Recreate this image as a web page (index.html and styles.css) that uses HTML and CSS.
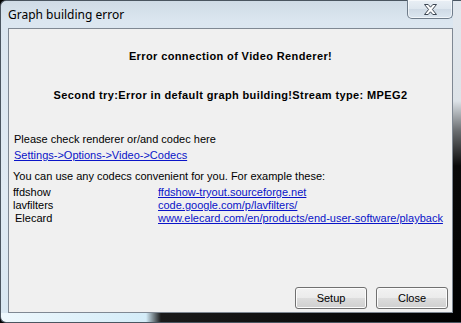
FILE: index.html
```html
<!DOCTYPE html>
<html lang="en">
<head>
    <meta charset="UTF-8">
    <title>Graph building error</title>
    <link rel="stylesheet" href="styles.css">
</head>
<body>

    <div class="window">
        <div class="titlebar">
            <span class="title">Graph building error</span>
            <button class="close-btn" aria-label="Close">
                <svg width="15" height="11" viewBox="0 0 15 11">
                    <path d="M1.5 0.5 H5.2 L7.5 3.2 L9.8 0.5 H13.5 L9.4 5.5 L13.5 10.5 H9.8 L7.5 7.8 L5.2 10.5 H1.5 L5.6 5.5 Z"
                          fill="#ffffff" stroke="#3c4652" stroke-width="1" stroke-linejoin="round"/>
                </svg>
            </button>
        </div>

        <div class="client">
            <p class="headline">Error connection of Video Renderer!</p>
            <p class="headline second">Second try:Error in default graph building!Stream type: MPEG2</p>

            <p class="note">Please check renderer or/and codec here</p>
            <a class="link settings" href="#">Settings-&gt;Options-&gt;Video-&gt;Codecs</a>

            <p class="note codecs-intro">You can use any codecs convenient for you. For example these:</p>
            <div class="codec-list">
                <span class="codec-name">ffdshow</span>
                <a class="link" href="#">ffdshow-tryout.sourceforge.net</a>
                <span class="codec-name">lavfilters</span>
                <a class="link" href="#">code.google.com/p/lavfilters/</a>
                <span class="codec-name indent">Elecard</span>
                <a class="link" href="#">www.elecard.com/en/products/end-user-software/playback</a>
            </div>

            <div class="buttons">
                <button class="btn">Setup</button>
                <button class="btn">Close</button>
            </div>
        </div>
    </div>

</body>
</html>
```

FILE: styles.css
```css
/* Page reset */
* {
    box-sizing: border-box;
    margin: 0;
    padding: 0;
}

body {
    width: 461px;
    height: 323px;
    overflow: hidden;
    background: #000;
    font-family: "Liberation Sans", Arial, sans-serif;
    font-size: 11px;
    color: #000;
}

/* Aero glass frame */
.window {
    width: 461px;
    height: 323px;
    display: flex;
    flex-direction: column;
    padding: 0 8px 9px 7px;
    border: 1px solid #4a5560;
    border-right: none;
    border-radius: 6px 0 0 6px;
    background:
        linear-gradient(to bottom, #e2e8ee 0, #dde3e8 100px, #6a6d70 130px, #0a0a0a 165px, #000 100%) right top / 8px 100% no-repeat,
        linear-gradient(to right, #eef8fd 0, #d4ecf8 145px, #1a1a1a 160px, #000 100%) left bottom / 100% 9px no-repeat,
        linear-gradient(to bottom, #cfdbe6 0, #dbe6f0 20px, #e0eaf3 60%, #d8e7f2 100%);
}

.titlebar {
    height: 27px;
    display: flex;
    align-items: flex-start;
    justify-content: space-between;
}

.title {
    font-family: "Noto Sans", "Open Sans", sans-serif;
    font-size: 12px;
    line-height: 14px;
    margin-top: 7px;
    color: #000;
}

.close-btn {
    width: 46px;
    height: 19px;
    margin-top: -1px;
    border: 1px solid #6f7c8a;
    border-top: none;
    border-radius: 0 0 5px 5px;
    background: linear-gradient(to bottom, #e9eff5 0, #dde6ee 50%, #cfdae5 51%, #dbe6f0 100%);
    box-shadow: inset 0 0 0 1px rgba(255, 255, 255, 0.6);
    display: flex;
    align-items: center;
    justify-content: center;
}

/* Dialog client area */
.client {
    flex: 1;
    display: flex;
    flex-direction: column;
    background: #f0f0f0;
    border: 1px solid #7f8893;
    padding: 21px 0 3px 0;
    line-height: 13px;
}

.headline {
    font-weight: bold;
    text-align: center;
    letter-spacing: 0.38px;
}

.headline.second {
    margin-top: 26px;
}

.note {
    padding-left: 5px;
    margin-top: 31px;
}

.codecs-intro {
    margin-top: 8px;
    padding-left: 4px;
}

.link {
    color: #0a14c8;
    text-decoration: underline;
}

.settings {
    align-self: flex-start;
    margin-left: 5px;
    margin-top: 3px;
}

.codec-list {
    display: grid;
    grid-template-columns: 145px auto;
    padding-left: 4px;
    margin-top: 3px;
}

.codec-name.indent {
    padding-left: 2px;
}

/* Bottom buttons */
.buttons {
    margin-top: auto;
    display: flex;
    justify-content: flex-end;
    gap: 9px;
    padding-right: 4px;
}

.btn {
    width: 72px;
    height: 22px;
    font-family: "Liberation Sans", Arial, sans-serif;
    font-size: 11px;
    color: #000;
    border: 1px solid #707070;
    border-radius: 3px;
    background: linear-gradient(to bottom, #f2f2f2 0, #ebebeb 50%, #dddddd 51%, #cfcfcf 100%);
    box-shadow: inset 0 0 0 1px #fcfcfc;
}
```
